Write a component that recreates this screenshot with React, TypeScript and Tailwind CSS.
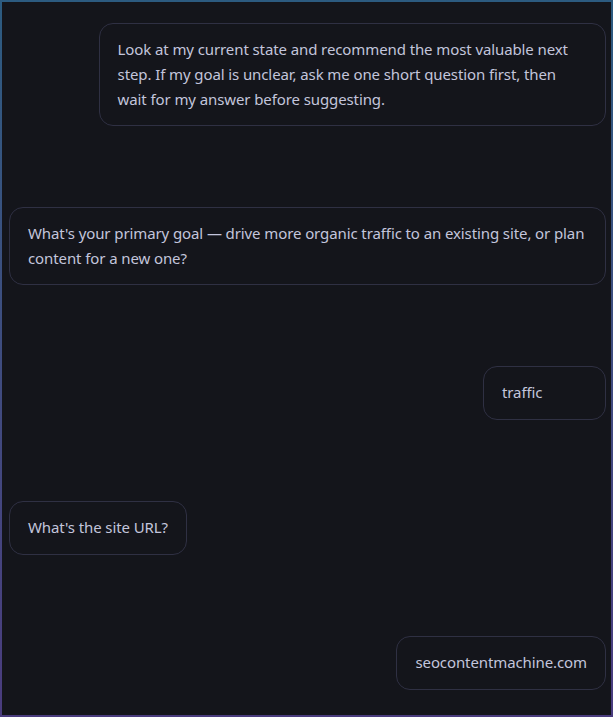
const messages = [
  {
    role: "user",
    text: "Look at my current state and recommend the most valuable next step. If my goal is unclear, ask me one short question first, then wait for my answer before suggesting.",
  },
  {
    role: "assistant",
    text: "What's your primary goal — drive more organic traffic to an existing site, or plan content for a new one?",
  },
  { role: "user", text: "traffic" },
  { role: "assistant", text: "What's the site URL?" },
  { role: "user", text: "seocontentmachine.com" },
];

function Bubble({ role, text }: { role: string; text: string }) {
  const isUser = role === "user";
  return (
    <div className={isUser ? "flex justify-end" : "flex justify-start"}>
      <div
        className={
          "min-h-[54px] min-w-[123px] rounded-[14px] border border-[#2f3043] bg-[#14151b] px-[18px] py-[13px] text-[15px] leading-[25px] tracking-[-0.1px] text-[#c3c5dc] " +
          (isUser ? "max-w-[85%]" : "max-w-full")
        }
      >
        {text}
      </div>
    </div>
  );
}

export default function App() {
  return (
    <div className="h-[717px] w-[613px] bg-gradient-to-b from-[#2c5b80] to-[#4a3c7e] p-[2px]">
      <div
        className="flex h-full flex-col gap-[81px] bg-[#14151b] pl-[7px] pr-[5px] pt-[21px]"
        style={{ fontFamily: '"Noto Sans", "Open Sans", sans-serif' }}
      >
        {messages.map((m, i) => (
          <Bubble key={i} role={m.role} text={m.text} />
        ))}
      </div>
    </div>
  );
}
